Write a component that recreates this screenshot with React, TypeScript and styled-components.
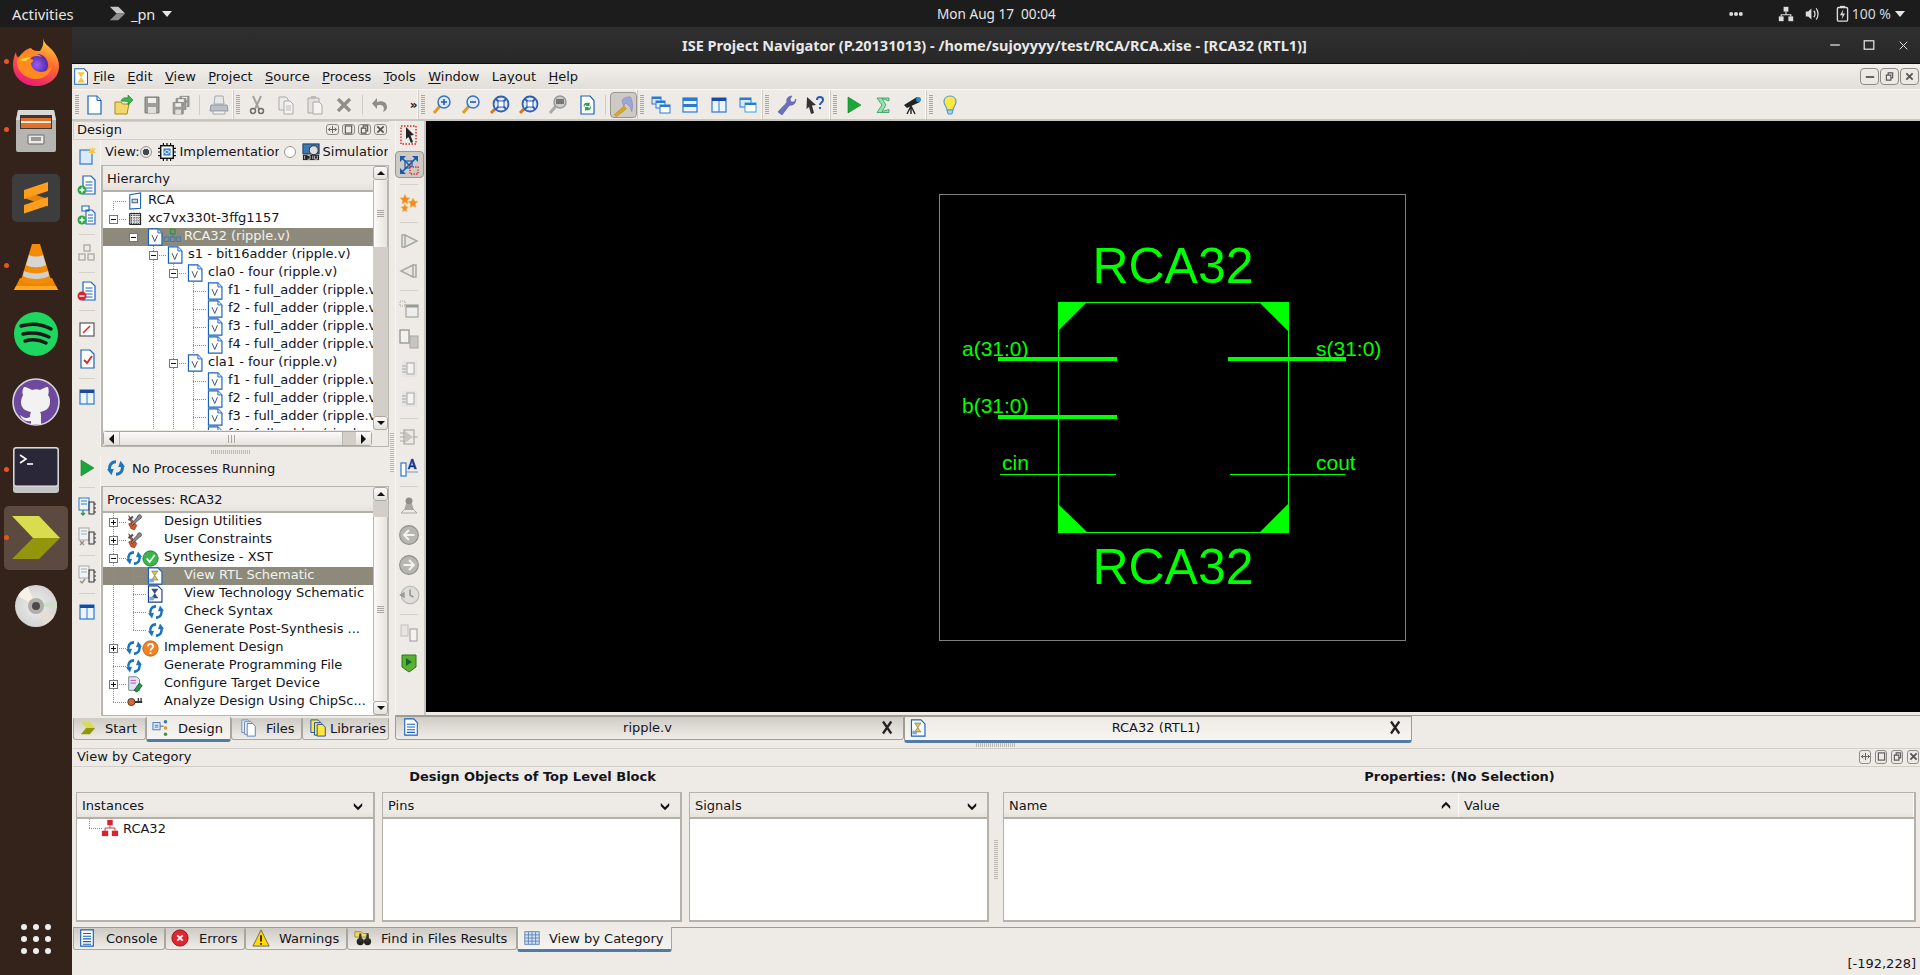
import React from 'react';
import styled, { createGlobalStyle } from 'styled-components';

const Global = createGlobalStyle`
  html, body { margin: 0; padding: 0; height: 100%; overflow: hidden; background: #33231a; }
  body { font-family: "DejaVu Sans", Verdana, sans-serif; font-size: 13px; color: #14141c; }
  #root { height: 100%; }
  * { box-sizing: border-box; }
`;

const Screen = styled.div`width:1920px;height:975px;display:flex;flex-direction:column;overflow:hidden;`;
const TopBar = styled.header`height:27px;flex:none;background:#1c1c1c;color:#e6e6e6;display:flex;align-items:center;padding:0 15px 0 12px;font-family:"Noto Sans","Open Sans",sans-serif;font-size:14px;position:relative;`;
const Activities = styled.span`width:97px;font-size:14.8px;`;
const AppName = styled.span`display:flex;align-items:center;gap:5px;`;
const AppLabel = styled.span`margin-right:2px;font-size:14.500px;`;
const Clock = styled.span`position:absolute;left:937px;top:4px;font-size:13.6px;white-space:pre;`;
const Tray = styled.div`margin-left:auto;display:flex;align-items:center;color:#dcdcdc;`;
const TrayIcon = styled.span<{ $gap: number }>`display:flex;margin-right:${p => p.$gap}px;`;
const Percent = styled.span`font-size:14px;margin:0 4px 0 1px;color:#cfd6dc;`;
const Caret = styled.i`display:block;width:0;height:0;border-left:5px solid transparent;border-right:5px solid transparent;border-top:6px solid #e6e6e6;`;
const Desk = styled.div`flex:1;display:flex;min-height:0;`;
const Dock = styled.nav`width:72px;flex:none;background:#33231a;display:flex;flex-direction:column;align-items:center;padding:1px 0 0;`;
const DockSlot = styled.div<{ $active?: boolean }>`width:64px;display:flex;align-items:center;justify-content:center;position:relative;border-radius:5px;background:${p => p.$active ? '#5c4a40' : 'transparent'};height:${p => p.$active ? '64px' : '68px'};margin:${p => p.$active ? '2px 0' : '0'};`;
const RunDot = styled.i`position:absolute;left:0;top:50%;margin-top:-3px;width:5px;height:5px;border-radius:50%;background:#e95420;`;
const AppGrid = styled.div`margin-top:auto;margin-bottom:21px;display:grid;grid-template-columns:repeat(3,6px);grid-gap:6px;`;
const AppDot = styled.i`width:6px;height:6px;border-radius:50%;background:#eee;`;

const Win = styled.main`flex:1;min-width:0;display:flex;flex-direction:column;background:#eeebe6;`;
const TitleBar = styled.div`height:37px;flex:none;background:linear-gradient(#2f2f2f,#282828);border-bottom:1px solid #0e0e0e;color:#e8e8e8;display:flex;align-items:center;font-family:"Noto Sans","Open Sans",sans-serif;font-weight:700;font-size:14.5px;padding-left:610px;position:relative;`;
const WinCtl = styled.div`position:absolute;right:0;top:0;height:36px;display:flex;align-items:center;`;
const WinBtn = styled.span`width:34px;display:flex;justify-content:center;`;
const MenuBar = styled.div`height:26px;flex:none;background:linear-gradient(#f1efea,#e2dfda);border-bottom:1px solid #f8f7f4;display:flex;align-items:center;padding-left:1px;`;
const MenuItem = styled.span`padding:0 6.2px;white-space:nowrap;line-height:26px;& u{text-underline-offset:2px;}`;
const MenuIcon = styled.span`width:15px;margin-right:-1px;display:flex;`;
const MdiBtns = styled.div`margin-left:auto;display:flex;gap:1px;padding-right:1px;`;
const MdiBtn = styled.span`width:19px;height:17px;border:1px solid #8e8b85;border-radius:4px;display:flex;align-items:center;justify-content:center;background:#ece9e4;`;
const ToolBar = styled.div`height:31px;flex:none;background:#eeebe6;border-bottom:2px solid #c9c6bf;display:flex;padding-left:0;margin-bottom:-1px;position:relative;z-index:1;`;
const ToolGroup = styled.div<{ $end?: boolean }>`display:flex;align-items:center;${p => p.$end ? '' : 'box-shadow:inset -1px 0 0 #fbfaf8,1px 0 0 #cfccc5;'}`;
const Grip = styled.i<{ $w?: number }>`width:${p => p.$w || 9.5}px;height:20px;flex:none;margin:0;background:repeating-linear-gradient(to bottom,#a9a69f 0 1px,transparent 1px 2px) 3px 0/4px 100% no-repeat;`;
const ToolBtn = styled.span<{ $on?: boolean; $w?: number }>`width:${p => p.$w || 29}px;height:${p => p.$on ? 26 : 24}px;flex:none;display:flex;align-items:center;justify-content:center;border-radius:4px;${p => p.$on ? 'background:#cdc9c3;border:1px solid #9a968f;' : ''}`;
const ToolSep = styled.i<{ $w?: number }>`width:${p => p.$w || 8.5}px;height:20px;flex:none;background:linear-gradient(#cfccc5,#cfccc5) center/1px 100% no-repeat;`;
const More = styled.span`width:23px;text-align:right;font-weight:700;font-size:12px;`;

const Workspace = styled.div`height:622px;flex:none;display:flex;padding-left:1px;`;
const LeftCol = styled.section`width:316px;flex:none;display:flex;flex-direction:column;`;
const VSplit = styled.div`width:6px;flex:none;display:flex;align-items:center;justify-content:center;padding-top:44px;`;
const VGrip = styled.i`width:4px;height:40px;background:repeating-linear-gradient(to bottom,#bdbab3 0 1px,transparent 1px 2px);`;
const PaneTitle = styled.div`height:19px;flex:none;margin-top:1px;border:1px solid #d2cfc8;border-width:1px 0 1px 1px;background:#eeebe6;display:flex;align-items:center;padding:0 0 3px 3px;`;
const PaneBtns = styled.div`margin-left:auto;display:flex;gap:3px;padding-right:2px;`;
const PaneBtn = styled.span`width:13px;height:11px;border:1px solid #8e8b85;border-radius:3px;display:flex;align-items:center;justify-content:center;`;
const Pane = styled.div<{ $h: number }>`height:${p => p.$h}px;flex:none;display:flex;`;
const IconRail = styled.div`width:28px;flex:none;display:flex;flex-direction:column;align-items:center;border-right:1px solid #f7f6f3;`;
const RailItem = styled.span`height:30px;width:100%;flex:none;display:flex;align-items:center;justify-content:center;`;
const RailFirst = styled(RailItem)`margin-top:-3px;`;
const RailSep = styled.i`height:8px;width:16px;flex:none;background:linear-gradient(#d4d1ca,#d4d1ca) center/100% 1px no-repeat;`;
const PaneMain = styled.div`flex:1;min-width:0;display:flex;flex-direction:column;`;
const ViewRow = styled.div`height:25px;flex:none;display:flex;align-items:center;padding:0 0 2px 4px;white-space:nowrap;overflow:hidden;`;
const Gap = styled.span<{ $w: number }>`width:${p => p.$w}px;flex:none;`;
const Radio = styled.i<{ $on?: boolean }>`width:12px;height:12px;flex:none;border-radius:50%;border:1px solid #9a968f;background:${p => p.$on ? 'radial-gradient(circle,#44484c 0 3px,#e6e4df 3.5px)' : '#fff'};`;
const ClipLabel = styled.span<{ $w: number }>`width:${p => p.$w}px;overflow:hidden;flex:none;`;
const StatusRow = styled.div`height:30px;flex:none;display:flex;align-items:center;gap:7px;padding:0 0 6px 6px;`;
const TreePanel = styled.div`flex:1;min-height:0;display:flex;flex-direction:column;border:1px solid #b9b6af;border-left-width:2px;background:#eeebe6;`;
const TreeTop = styled.div`flex:1;min-height:0;display:flex;`;
const TreeCol = styled.div`flex:1;min-width:0;display:flex;flex-direction:column;`;
const HeaderCell = styled.div`height:26px;flex:none;border-bottom:2px solid #b3b0a9;background:linear-gradient(#eeebe6 70%,#e5e2dc);display:flex;align-items:center;padding-left:4px;`;
const TreeBody = styled.div`flex:1;min-height:0;overflow:hidden;background:#fff;`;
const Row = styled.div<{ $sel?: boolean }>`height:18px;display:flex;align-items:center;padding-left:5px;white-space:nowrap;background:${p => p.$sel ? '#8d8a7b' : 'transparent'};color:${p => p.$sel ? '#f2f2ee' : '#14141c'};overflow:hidden;`;
const RowText = styled.span`padding-bottom:2px;line-height:16px;`;
const Indent = styled.i<{ $line?: boolean }>`width:20px;height:18px;flex:none;${p => p.$line ? 'background:repeating-linear-gradient(to bottom,#8f8f8f 0 1px,transparent 1px 2px) 5px 0/1px 100% no-repeat;' : ''}`;
const Exp = styled.span<{ $v?: 'full' | 'up' | 'down' | 'none' }>`width:20px;height:18px;flex:none;position:relative;display:block;
  &::before{content:'';position:absolute;left:5px;width:1px;top:${p => p.$v === 'down' ? '9px' : '0'};bottom:${p => p.$v === 'up' ? '9px' : '0'};display:${p => p.$v === 'none' ? 'none' : 'block'};background:repeating-linear-gradient(to bottom,#8f8f8f 0 1px,transparent 1px 2px);}
  &::after{content:'';position:absolute;left:5px;width:13px;top:9px;height:1px;background:repeating-linear-gradient(to right,#8f8f8f 0 1px,transparent 1px 2px);}
`;
const ExpBox = styled.b`position:absolute;z-index:1;left:1px;top:5px;width:9px;height:9px;border:1px solid #777;background:#fff;display:flex;align-items:center;justify-content:center;`;
const ExpBar = styled.i<{ $plus?: boolean }>`display:block;width:5px;height:1px;background:#111;position:relative;${p => p.$plus ? '&::after{content:"";position:absolute;left:2px;top:-2px;width:1px;height:5px;background:#111;}' : ''}`;
const IconBox = styled.span<{ $w: number; $pull?: boolean }>`width:${p => p.$w}px;height:18px;flex:none;display:flex;align-items:center;gap:0;${p => p.$pull ? 'margin-left:-2px;' : ''}`;
const ScrollV = styled.div`width:15px;flex:none;display:flex;flex-direction:column;background:#eeebe6;`;
const ScrollBtn = styled.span`height:14px;flex:none;border:1px solid #aaa7a0;border-radius:3px;background:linear-gradient(#fbfaf8,#e4e1db);display:flex;align-items:center;justify-content:center;`;
const Arrow = styled.i<{ $d: 'u' | 'd' | 'l' | 'r' }>`width:0;height:0;display:block;${p => p.$d === 'u' ? 'border-left:4px solid transparent;border-right:4px solid transparent;border-bottom:4px solid #111;' : p.$d === 'd' ? 'border-left:4px solid transparent;border-right:4px solid transparent;border-top:4px solid #111;' : p.$d === 'l' ? 'border-top:5px solid transparent;border-bottom:5px solid transparent;border-right:5px solid #111;' : 'border-top:5px solid transparent;border-bottom:5px solid transparent;border-left:5px solid #111;'}`;
const Thumb = styled.div<{ $h?: number }>`${p => p.$h ? `height:${p.$h}px;flex:none;` : 'flex:1;'}background:linear-gradient(to right,#fbfaf8,#e6e3dd);border:1px solid #b9b6af;border-width:0 1px;display:flex;align-items:center;justify-content:center;`;
const Track = styled.div<{ $h?: number }>`${p => p.$h ? `height:${p.$h}px;flex:none;` : 'flex:1;'}background:#d3cfc8;`;
const HTrack = styled.div`width:13px;flex:none;background:#d3cfc8;`;
const ThumbGrip = styled.i`width:7px;height:7px;background:repeating-linear-gradient(to bottom,#aaa7a0 0 1px,transparent 1px 2px);`;
const ScrollH = styled.div`height:15px;flex:none;margin:1px 16px 0 0;display:flex;border:1px solid #aaa7a0;border-radius:3px;`;
const HBtn = styled.span`width:15px;flex:none;background:linear-gradient(#fbfaf8,#e4e1db);display:flex;align-items:center;justify-content:center;`;
const HThumb = styled.div`flex:1;background:linear-gradient(#fbfaf8,#e6e3dd);border:1px solid #b9b6af;border-width:0 1px;display:flex;align-items:center;justify-content:center;`;
const HThumbGrip = styled.i`width:7px;height:8px;background:repeating-linear-gradient(to right,#aaa7a0 0 1px,transparent 1px 3px);`;
const HSplit = styled.div<{ $h: number }>`height:${p => p.$h}px;flex:none;display:flex;justify-content:center;align-items:center;`;
const HGrip = styled.i`width:40px;height:4px;background:repeating-linear-gradient(to right,#bdbab3 0 1px,transparent 1px 2px);`;

const TabRow = styled.div<{ $h: number; $line?: boolean }>`height:${p => p.$h}px;flex:none;display:flex;align-items:flex-start;padding-top:${p => p.$line ? 0 : 2}px;${p => p.$line ? 'border-top:1px solid #9f9c95;' : ''}`;
const Tab = styled.div<{ $w: number; $on?: boolean; $pad?: number; $gap?: number }>`width:${p => p.$w}px;flex:none;height:${p => p.$on ? 25 : 22}px;display:flex;align-items:center;gap:${p => p.$gap ?? 9}px;padding-left:${p => p.$pad || 5}px;padding-bottom:${p => p.$on ? 0 : 2}px;white-space:nowrap;border:1px solid #a9a69f;border-top-color:#d0cdc7;border-radius:0 0 3px 3px;background:${p => p.$on ? 'linear-gradient(#eeebe6,#f6f4f0)' : 'linear-gradient(#cfccc6,#f0ede8)'};${p => p.$on ? 'border-bottom:3px solid #4f7ba6;border-top:none;margin-top:-1px;' : ''}`;
const DocTab = styled.div<{ $w: number; $on?: boolean }>`width:${p => p.$w}px;flex:none;height:${p => p.$on ? 27 : 24}px;display:flex;align-items:center;padding:0 9px 2px 6px;white-space:nowrap;border:1px solid #9f9c95;border-radius:0 0 3px 3px;background:${p => p.$on ? 'linear-gradient(#eeebe6,#f7f5f1)' : 'linear-gradient(#cfccc6,#f0ede8)'};${p => p.$on ? 'border-bottom:3px solid #4f7ba6;' : ''}`;
const DocLabel = styled.span`flex:1;text-align:center;padding-right:5px;`;
const BigX = styled.span`display:flex;width:14px;justify-content:center;`;

const RightCol = styled.section`flex:1;min-width:0;display:flex;flex-direction:column;`;
const UpperRow = styled.div`height:595px;flex:none;display:flex;`;
const VTools = styled.div`width:31px;flex:none;display:flex;flex-direction:column;align-items:center;border-left:1px solid #f7f6f3;border-right:2px solid #c9c6bf;padding-right:2px;`;
const VBtn = styled.span<{ $on?: boolean }>`height:30px;width:29px;flex:none;display:flex;align-items:center;justify-content:center;border-radius:4px;${p => p.$on ? 'background:#cdc9c3;border:1px solid #9a968f;height:27px;margin:1px 0 2px;' : ''}`;
const VSep = styled.i`height:8px;width:18px;flex:none;background:linear-gradient(#d4d1ca,#d4d1ca) center/100% 1px no-repeat;`;
const Canvas = styled.div`flex:1;height:591px;margin-top:1px;background:#000;display:flex;`;
const Drawing = styled.svg`width:100%;height:100%;display:block;`;

const BottomTitle = styled.div`height:19px;flex:none;margin-left:1px;border:1px solid #d2cfc8;border-width:1px 0;display:flex;align-items:center;padding:0 0 2px 4px;`;
const BottomBtns = styled(PaneBtns)`padding-right:1px;gap:4px;`;
const TinyBtn = styled(PaneBtn)`width:12px;height:14px;`;
const Sections = styled.div`height:155px;flex:none;display:flex;padding:0 4px 0 4px;`;
const Section = styled.div<{ $w: number }>`width:${p => p.$w}px;flex:none;display:flex;flex-direction:column;`;
const SectionTitle = styled.div`height:25px;flex:none;font-weight:700;text-align:center;line-height:20px;`;
const SectionPanels = styled.div`flex:1;min-height:0;display:grid;grid-template-columns:299px 300px 300px;column-gap:7px;`;
const ListBox = styled.div<{ $grow?: boolean }>`border:1px solid #b5b2ab;border-width:1px 2px 2px 1px;display:flex;flex-direction:column;background:#fff;min-width:0;${p => p.$grow ? 'flex:1;' : ''}`;
const ListHead = styled.div`height:26px;flex:none;background:linear-gradient(#eeebe6 75%,#e6e3dd);border-bottom:2px solid #b3b0a9;display:flex;align-items:center;padding:1px 9px 0 5px;justify-content:space-between;`;
const PropHead = styled.div`height:26px;flex:none;background:linear-gradient(#eeebe6 75%,#e6e3dd);border-bottom:2px solid #b3b0a9;display:grid;grid-template-columns:455px 1fr;`;
const PropCell = styled.div`display:flex;align-items:center;justify-content:space-between;padding:1px 6px 0 5px;border-right:1px solid #fbfaf8;`;
const InstRow = styled.div`height:18px;display:flex;align-items:center;padding-left:7px;white-space:nowrap;`;
const InstIcon = styled.span`display:flex;margin:0 4px 0 -3px;`;
const SideGrip = styled.div`width:14px;flex:none;display:flex;align-items:center;justify-content:center;padding-top:30px;`;
const SideGripBar = styled.i`width:4px;height:40px;background:repeating-linear-gradient(to bottom,#bdbab3 0 1px,transparent 1px 2px);`;
const StatusBar = styled.div`flex:1;display:flex;align-items:center;justify-content:flex-end;padding:0 4px 0 0;`;
const BottomTabs = styled.div`height:25px;flex:none;margin-top:5px;margin-left:1px;border-top:1px solid #9f9c95;display:flex;align-items:flex-start;`;

/* ---------- icons ---------- */
const Ico = styled.svg.attrs<{ $s?: number }>({ viewBox: '0 0 20 20' })<{ $s?: number }>`width:${p => p.$s || 20}px;height:${p => p.$s || 20}px;flex:none;display:block;overflow:visible;`;
const B = '#1a62b8';
const IVFile = () => <Ico $s={18}><path d="M.5 1h10.500l4.500 4.500V19H.5z" fill="#fff" stroke={B} strokeWidth="1.300"/><path d="M11 1v4.500h4.500" fill="#d6e6f8" stroke={B}/><path d="M4.500 8l3 7 3-7" fill="none" stroke="#456" strokeWidth="1.100"/></Ico>;
const IModule = () => <Ico $s={18}><g transform="translate(-3 0)"><g fill="none" stroke="#3a78b8"><rect x="1" y="10" width="5" height="5"/><rect x="8" y="10" width="5" height="5"/><rect x="15" y="10" width="4" height="5"/></g><rect x="8" y="1.500" width="5" height="5" fill="none" stroke="#2c9a3a" strokeWidth="1.500"/><path d="M10.500 6.500v3" stroke="#3a78b8"/></g></Ico>;
const IProject = () => <Ico $s={18}><g transform="translate(-2 0)"><path d="M4 3l12-2v17l-12 1z" fill="#fff" stroke={B} strokeWidth="1.200"/><rect x="6.500" y="8" width="6" height="4" fill="#c6d9ee" stroke="#356"/></g></Ico>;
const IChip = () => <Ico $s={18}><g transform="translate(-2 0)"><rect x="4" y="4" width="12" height="12" fill="#eee" stroke="#222" strokeWidth="1.200"/><path d="M3 6h14M3 9h14M3 12h14M3 15h14M6 3v14M9 3v14M12 3v14M15 3v14" stroke="#222" strokeDasharray="1 1.500"/></g></Ico>;
const Refresh = ({ s = 16 }: { s?: number }) => <Ico $s={s}><path d="M10 3C4.500 3 1.500 8 3.500 13" fill="none" stroke="#1c75bc" strokeWidth="3.200"/><path d="M0 11.500l7.500-.5-2.500 7z" fill="#1c75bc"/><path d="M10 17c5.500 0 8.500-5 6.500-10" fill="none" stroke="#1c75bc" strokeWidth="3.200"/><path d="M20 8.500l-7.500.5 2.500-7z" fill="#1c75bc"/></Ico>;
const Check = () => <Ico $s={17}><circle cx="10" cy="10" r="9" fill="#3cb54a" stroke="#1c7a2a"/><path d="M5.500 10l3.500 4 6-8" fill="none" stroke="#fff" strokeWidth="2"/></Ico>;
const Question = () => <Ico $s={17}><circle cx="10" cy="10" r="9" fill="#f58220" stroke="#b85a10"/><path d="M7 7.500c0-4 6-4 6 0 0 2.500-3 2.500-3 5M10 14.500v2" fill="none" stroke="#fff" strokeWidth="2"/></Ico>;
const Tools = () => <Ico $s={18}><path d="M3 3l9 11-2.500 4.500-4-1L3 12l3-1z" fill="#d9532c" stroke="#7a2a12" strokeWidth=".7"/><path d="M16 2c2 2 1.500 4-.5 4.500L7 14l-1.500-1.500 7-8C12.500 3 14 1.500 16 2z" fill="#888" stroke="#333" strokeWidth=".7"/><path d="M2 7l5-4 1.500 2-5 4z" fill="#555"/></Ico>;
const SchemDoc = ({ tint = '#f3c63d', dark }: { tint?: string; dark?: boolean }) => <Ico $s={18}><path d="M.5 1h10.500l4.500 4.500V19H.5z" fill="#fff" stroke={dark ? '#1b3f8f' : B} strokeWidth="1.300"/><path d="M4 4.500h7l-3.500 5zM4 14.500h7l-3.500-5z" fill={tint} stroke="#555" strokeWidth=".6"/><rect x="1.500" y="13" width="5" height="4" fill="#7aa7dc"/></Ico>;
const Chip2 = () => <Ico $s={18}><path d="M3 2h9l3 3v12H3z" fill="#dde6f0" stroke="#6a7a8c"/><path d="M5 6h6M5 9h6" stroke="#d33a9a"/><path d="M9 17l6-8 3 3-6 7z" fill="#2c9a3a" stroke="#155"/></Ico>;
const KeyIcon = () => <Ico $s={18}><circle cx="6" cy="10" r="4" fill="#e0652c" stroke="#333"/><path d="M10 9h8v2h-8zM13 5.500h1.500V9H13zM16 5.500h1.500V9H16z" fill="#333"/></Ico>;
const Instance = () => <Ico $s={18}><rect x="7" y="1" width="6" height="6" fill="#d9232e"/><rect x="1" y="13" width="7" height="6" fill="#d9232e"/><rect x="12" y="13" width="7" height="6" fill="#d9232e"/><path d="M10 7v3M4.500 13v-3h11v3" fill="none" stroke="#a33"/></Ico>;

const NewDoc = () => <Ico><path d="M4 1h9l4 4.500V19H4z" fill="#fff" stroke={B} strokeWidth="1.200"/><path d="M13 1v4.500h4" fill="#d6e6f8" stroke={B}/></Ico>;
const OpenF = () => <Ico><path d="M2 7h6l1.500 2H16l-2 10H2z" fill="#f2d868" stroke="#a68a22"/><path d="M8 6c1-3 4-4 7-3V0l5 5-5 5V6.500c-3-.5-5 0-7-.5z" fill="#3cb54a" stroke="#1c7a2a" strokeWidth=".6"/></Ico>;
const Floppy = ({ x = 0, y = 0, s = 1 }: { x?: number; y?: number; s?: number }) => <g transform={`translate(${x} ${y}) scale(${s})`}><path d="M3 2h14v16H3z" fill="#9d9c97" stroke="#7d7c78"/><rect x="6" y="3" width="8" height="5" fill="#f0efec"/><rect x="6" y="12" width="8" height="6" fill="#e0dfdb"/></g>;
const Save = () => <Ico><Floppy/></Ico>;
const SaveAll = () => <Ico><Floppy x={7} y={0} s={.65}/><Floppy x={3} y={2} s={.7}/><Floppy x={0} y={6} s={.72}/></Ico>;
const Printer = () => <Ico><path d="M6 1h8l1 8H5z" fill="#e6e8ec" stroke="#a6a8ac"/><path d="M2 10h16l1 6H1z" fill="#bcc0c6" stroke="#94979c"/><path d="M4 16h12v3H4z" fill="#f2f2f2" stroke="#a6a8ac"/></Ico>;
const Cut = () => <Ico><path d="M6 1l6 13M14 1L8 14" stroke="#a3a29d" strokeWidth="2" fill="none"/><circle cx="6" cy="16" r="2.500" fill="none" stroke="#6f6e6a" strokeWidth="1.500"/><circle cx="14" cy="16" r="2.500" fill="none" stroke="#6f6e6a" strokeWidth="1.500"/></Ico>;
const Copy = () => <Ico><path d="M3 2h7l2 2v11H3z" fill="#eeedea" stroke="#aaa9a4"/><path d="M8 6h6l3 3v10H8z" fill="#f4f3f1" stroke="#aaa9a4"/><path d="M10 11h5M10 13h5M10 15h5" stroke="#bbb"/></Ico>;
const Paste = () => <Ico><path d="M3 3h11v15H3z" fill="#e4e2dd" stroke="#aaa9a4"/><rect x="6" y="1" width="5" height="3" fill="#bbb"/><path d="M8 7h6l3 3v9H8z" fill="#f4f3f1" stroke="#aaa9a4"/></Ico>;
const Cross = ({ c = '#8e8d88', w = 3.2 }: { c?: string; w?: number }) => <Ico><path d="M4 4l12 12M16 4L4 16" stroke={c} strokeWidth={w}/></Ico>;
const Undo = () => <Ico><path d="M7 7c5-2 10 0 10 5 0 2-1 4-4 5 1-2 2-6-2-7-1 0-3 0-4 .5V14L2 8.500 7 3z" fill="#8e8d88"/></Ico>;
const Mag = ({ g, grey }: { g: 'plus' | 'minus' | 'none'; grey?: boolean }) => <Ico><path d="M2 18l6-7" stroke={grey ? '#aaa' : '#e09a2a'} strokeWidth="3"/><circle cx="12" cy="7" r="6" fill={grey ? '#ccc' : '#dfeafa'} stroke={grey ? '#999' : '#3c72c0'} strokeWidth="1.500"/>{g === 'plus' && <path d="M9 7h6M12 4v6" stroke="#2a5ab0" strokeWidth="1.600"/>}{g === 'minus' && <path d="M9 7h6" stroke="#2a5ab0" strokeWidth="1.600"/>}{g === 'none' && <rect x="8" y="4" width="8" height="5" fill="#777"/>}</Ico>;
const Buoy = () => <Ico><path d="M1 18l4-4" stroke="#d9761a" strokeWidth="3"/><circle cx="11" cy="9" r="7.500" fill="#dfeafa" stroke="#2f5fb0" strokeWidth="1.800"/><path d="M6 4l10 10M16 4L6 14" stroke="#2f5fb0" strokeWidth="1.800"/><rect x="8" y="6" width="6" height="6" fill="#fff" stroke="#2f5fb0"/></Ico>;
const RefreshDoc = () => <Ico><path d="M4 1h9l4 4.500V19H4z" fill="#fff" stroke={B} strokeWidth="1.200"/><path d="M6.500 11c0-3 3-4 5-3l1-1v4h-4l1-1c-1-.5-2 0-2 2zM14 12c0 3-3 4-5 3l-1 1v-4h4l-1 1c1 .5 2 0 2-2z" fill="#27a34a"/></Ico>;
const Hammer = () => <Ico $s={22}><path d="M2 19l9-8 2 2.500-9 7z" fill="#e0a81a" stroke="#a67a10" strokeWidth=".5"/><path d="M9 6c2-3 6-4 8-3 2 4 2 9 1 13-1-4-3-7-6-7.500L10.500 11z" fill="#9da6d6" stroke="#7a82b4" strokeWidth=".5"/></Ico>;
const Win1 = () => <Ico><g stroke="#2a7ad0" strokeWidth="1"><rect x="1" y="2" width="9" height="7" fill="#dbe9fa"/><rect x="5" y="6" width="9" height="7" fill="#eaf2fc"/><rect x="9" y="10" width="10" height="8" fill="#fff"/></g><path d="M1 2h9v2H1zM5 6h9v2H5zM9 10h10v2H9z" fill="#2a7ad0"/></Ico>;
const Win2 = () => <Ico><rect x="3" y="3" width="14" height="14" fill="#eef4fc" stroke="#2a7ad0" strokeWidth="1.200"/><path d="M3 3h14v3H3zM3 9h14v3H3z" fill="#2a7ad0"/></Ico>;
const Win3 = ({ c = '#2a7ad0' }: { c?: string }) => <Ico><rect x="3" y="3" width="14" height="14" fill="#eef4fc" stroke={c} strokeWidth="1.200"/><path d="M3 3h14v3H3z" fill="#1a4aa0"/><path d="M10 6v11" stroke={c}/></Ico>;
const Win4 = () => <Ico><rect x="2" y="3" width="11" height="9" fill="#dbe9fa" stroke="#2a7ad0"/><rect x="7" y="8" width="11" height="9" fill="#fff" stroke="#3aa0e0"/><path d="M2 3h11v2H2zM7 8h11v2H7z" fill="#2a7ad0"/></Ico>;
const Wrench = () => <Ico><path d="M2 17c3-4 6-6 9-10-1-3 1-6 5-6l-2 3 1 3 3 0 2-3c0 4-3 7-6 6-3 3-5 6-8 10z" fill="#6a6fbf" stroke="#484c94" strokeWidth=".5"/></Ico>;
const HelpPtr = () => <Ico><path d="M2 2l9 8-4 .5L9 18l-3 1-2-7-2.500 2z" fill="#333"/><path d="M12 5c0-4 6-4 6 0 0 2.500-3 2.500-3 5M15 12v2" fill="none" stroke="#2a5ab0" strokeWidth="2"/></Ico>;
const Play = ({ s = 20 }: { s?: number }) => <Ico $s={s}><path d="M4 2l13 8-13 8z" fill="#1aa63a" stroke="#12802a" strokeWidth=".6"/></Ico>;
const Sigma = () => <Ico><path d="M4 3h12v3L9 3.500 13 10l-4 6.500 7-2v3H4l5-7.500z" fill="#9adfae" stroke="#2c9a5a" strokeWidth=".8"/></Ico>;
const Scope = () => <Ico><path d="M2 10L15 2l3 5L5 13z" fill="#222"/><circle cx="16.500" cy="4.500" r="2.500" fill="#2a8ac0"/><path d="M9 11l-4 8M9 11l4 8M9 11v8" stroke="#222" strokeWidth="1.400"/></Ico>;
const Bulb = () => <Ico><path d="M10 1c4 0 6 3 6 6 0 3-3 5-3 8H7c0-3-3-5-3-8 0-3 2-6 6-6z" fill="#ffe640" stroke="#4a9ad0" strokeWidth="1.100"/><path d="M7 15h6l-1 4H8z" fill="#a8d0ec" stroke="#4a9ad0"/></Ico>;
const Select = () => <Ico><rect x="2" y="1" width="15" height="18" fill="none" stroke="#e02020" strokeWidth="1.400" strokeDasharray="1.500 1.500"/><path d="M7 2l8 8-3.500.5L14 17l-2 1-2.500-6L7 14z" fill="#222"/></Ico>;
const Fit = () => <Ico><path d="M3 3l14 14M17 3L3 17" stroke="#1a5ab0" strokeWidth="1.600" fill="none"/><path d="M1 1h6L1 7zM19 1h-6l6 6zM1 19h6l-6-6z" fill="#1a5ab0"/><rect x="6" y="6" width="7" height="7" fill="none" stroke="#1a5ab0" strokeWidth="1.200"/><rect x="11" y="12" width="8" height="7" fill="#cdc9c3" stroke="#e02020" strokeWidth="1.300" strokeDasharray="1.300 1.300"/></Ico>;
const Stars = () => <Ico><path d="M6 1l1.500 3.500L11 5 8.500 7.500 9 11 6 9.500 3 11l.5-3.500L1 5l3.500-.500zM14 5l1.500 3 3.500.5-2.500 2.500.5 3.500-3-1.500-3 1.500.5-3.500L9 8.500l3.500-.5zM6 11l1 2.500 2.500.5-2 2 .5 3-2-1.500-2.500 1.500.5-3-2-2 2.500-.5z" fill="#f08a2a" stroke="#f2c64a" strokeWidth=".5"/></Ico>;
const G = '#a9a8a3';
const GateR = () => <Ico><path d="M3 4h3v12H3zM6 4l12 6-12 6z" fill="#e8e7e3" stroke={G} strokeWidth="1.500"/></Ico>;
const GateL = () => <Ico><path d="M17 4h-3v12h3zM14 4L2 10l12 6z" fill="#e8e7e3" stroke={G} strokeWidth="1.500"/></Ico>;
const Gray1 = () => <Ico><rect x="7" y="6" width="12" height="12" fill="#eee" stroke={G} strokeWidth="1.300"/><rect x="7" y="6" width="12" height="2.500" fill="#999"/><path d="M1 2h5v5H1z" fill="none" stroke={G} strokeDasharray="1 1"/></Ico>;
const Gray2 = () => <Ico><rect x="1" y="1" width="9" height="13" fill="#f2f1ee" stroke="#8e8d88" strokeWidth="1.200"/><rect x="11" y="7" width="8" height="12" fill="#c6c5c0" stroke={G}/></Ico>;
const Gray3 = () => <Ico><rect x="3" y="2" width="15" height="16" fill="#e6e5e2"/><rect x="8" y="4" width="7" height="11" fill="#f4f3f1" stroke={G}/><path d="M3 7h4M3 10h4M3 13h4" stroke={G}/></Ico>;
const Gray4 = () => <Ico><path d="M1 6h5M1 10h5M1 14h5M14 10h5" stroke={G}/><rect x="5" y="3" width="10" height="14" fill="none" stroke={G} strokeWidth="1.200"/><path d="M6 4l8 6-8 6z" fill="#c6c5c0"/></Ico>;
const TextA = () => <Ico><rect x="2" y="6" width="5" height="13" fill="#fff" stroke="#2a7ad0" strokeWidth="1.200"/><path d="M9 12L12.500 2h1.500l3.500 10h-2l-.7-2h-3.600l-.7 2zM11.700 8.500h2.600L13 4.500zM8 15h11" fill="#1a3a90" stroke="#1a3a90" strokeWidth=".5"/></Ico>;
const Pawn = () => <Ico><circle cx="10" cy="6" r="3.500" fill="#8e8d88"/><path d="M7 9h6l2 6H5z" fill="#a8a7a2"/><path d="M2 18l8-8 8 8z" fill="none" stroke={G}/></Ico>;
const Round = ({ d }: { d: 'l' | 'r' }) => <Ico $s={22}><circle cx="10" cy="10" r="8.500" fill="#b7b6b1" stroke="#8e8d88"/><path d={d === 'l' ? 'M15 10H6M10 5.500L5.500 10l4.500 4.500' : 'M5 10h9M10 5.500l4.500 4.500L10 14.500'} fill="none" stroke="#f4f3f0" strokeWidth="1.800"/></Ico>;
const Clock2 = () => <Ico $s={22}><circle cx="11" cy="10" r="8" fill="#dededb" stroke="#b5b4af"/><path d="M1 10l5-3v6z" fill="#9a9994"/><path d="M11 5v5l3 2" stroke="#8e8d88" strokeWidth="1.300" fill="none"/></Ico>;
const TwoBox = () => <Ico><rect x="2" y="2" width="7" height="11" fill="#e6e5e2" stroke="#c2c1bc"/><rect x="11" y="6" width="7" height="12" fill="#f4f3f1" stroke={G} strokeWidth="1.200"/></Ico>;
const GreenPin = () => <Ico><path d="M3 2h14v12l-7 5-7-5z" fill="#5cb030" stroke="#2a7a14"/><path d="M7 5l6 4-6 4z" fill="#163"/></Ico>;
const NewLeaf = () => <Ico><rect x="3" y="5" width="12" height="14" fill="#dbe9fa" stroke="#2a7ad0" strokeWidth="1.200"/><path d="M15 1l1 3 3-1-2 3 2 2-3 0-1 2-1-2-3 0 2-2-1-3 3 1z" fill="#f7c64a"/></Ico>;
const DocList = ({ sign }: { sign?: string }) => <Ico><path d="M6 1h8l4 4v14H6z" fill="#fff" stroke={B} strokeWidth="1.200"/><path d="M8.500 7h7M8.500 10h7M8.500 13h7M8.500 16h7" stroke={B}/>{sign && <><circle cx="5" cy="15" r="4.500" fill={sign}/><path d={sign === '#d9232e' ? 'M2.500 15h5' : 'M2.500 15h5M5 12.500v5'} stroke="#fff" strokeWidth="1.500"/></>}</Ico>;
const DocList2 = () => <Ico><path d="M5 1h7v5H5zM9 5h6l3 3v11H9z" fill="#fff" stroke={B} strokeWidth="1.100"/><path d="M11 10h5M11 13h5M11 16h5" stroke={B}/><circle cx="5" cy="15" r="4.500" fill="#2ea84a"/><path d="M2.500 15h5M5 12.500v5" stroke="#fff" strokeWidth="1.500"/></Ico>;
const Nodes = () => <Ico><rect x="7" y="2" width="6" height="6" fill="none" stroke="#a9a8a3" strokeWidth="1.300"/><rect x="2" y="11" width="6" height="6" fill="none" stroke="#a9a8a3" strokeWidth="1.300"/><rect x="11" y="11" width="6" height="6" fill="none" stroke="#a9a8a3" strokeWidth="1.300"/></Ico>;
const RedGauge = () => <Ico><rect x="3" y="4" width="14" height="13" fill="#fff" stroke="#555" strokeWidth="1.200"/><path d="M6 14l7-7" stroke="#d9232e" strokeWidth="1.500"/></Ico>;
const CheckDoc = () => <Ico><path d="M4 1h9l4 4v14H4z" fill="#fff" stroke={B} strokeWidth="1.200"/><path d="M7 11l3 3 5-7" stroke="#d9232e" strokeWidth="1.800" fill="none"/></Ico>;
const Chip3 = ({ c, m }: { c: string; m: string }) => <Ico><rect x="2" y="2" width="10" height="12" fill="#eef4fc" stroke={c} strokeWidth="1"/><path d="M4 5h6M4 8h6" stroke={c}/><rect x="12" y="6" width="5" height="12" fill="none" stroke="#333"/><path d="M17 8h2M17 12h2M17 16h2" stroke="#333"/>{m === 'd' && <path d="M6 14v5M4 17l2 2 2-2" stroke="#2a9a3a" strokeWidth="1.300" fill="none"/>}{m === 'x' && <path d="M3 15l4 4M7 15l-4 4" stroke="#8e8d88" strokeWidth="1.300"/>}{m === 'c' && <path d="M3 17l2 2 3-4" stroke="#8e8d88" strokeWidth="1.300" fill="none"/>}</Ico>;
const ImplIcon = () => <Ico $s={18}><rect x="3" y="3" width="14" height="14" fill="#fff" stroke="#111" strokeWidth="1.600"/><path d="M0 6h3M0 10h3M0 14h3M17 6h3M17 10h3M17 14h3M6 0v3M10 0v3M14 0v3M6 17v3M10 17v3M14 17v3" stroke="#111" strokeWidth="1.300"/><rect x="6" y="6" width="8" height="8" fill="#3a8ad0"/><path d="M7.500 10.500c0-3 5-3 5-.5M12.500 9.500c0 3-5 3-5 .5" stroke="#fff" fill="none"/></Ico>;
const SimIcon = () => <Ico $s={18}><rect x="1" y="1" width="18" height="11" fill="#3a78b8" stroke="#234"/><circle cx="13" cy="8" r="5" fill="#ddd" stroke="#222"/><rect x="1" y="13" width="18" height="6" fill="#222"/><path d="M3 14v4M6 14h3v4h-3M12 14v4M14 14v4h3v-4" stroke="#fff" fill="none" strokeWidth=".8"/></Ico>;
const Chevron = ({ s = 18 }: { s?: number }) => <Ico $s={s}><path d="M2 3h10l6 7H8z" fill="#d9dc4e"/><path d="M18 10l-6 7H2l6-7z" fill="#93960c"/></Ico>;
const FlowIcon = () => <Ico $s={18}><rect x="1" y="4" width="8" height="8" fill="#dbe9fa" stroke="#3a78b8"/><path d="M3 7h4M3 9h4" stroke="#3a78b8"/><circle cx="15" cy="3" r="2" fill="#3a78b8"/><circle cx="15" cy="10" r="2" fill="#e09a2a"/><circle cx="15" cy="17" r="2" fill="#3a9a4a"/><path d="M9 8h4" stroke="#555"/></Ico>;
const FilesIcon = () => <Ico $s={18}><path d="M2 1h7l2 2v12H2z" fill="#dbe9fa" stroke="#6a8ab8"/><path d="M5 3h7l2 2v12H5z" fill="#eaf2fc" stroke="#6a8ab8"/><path d="M8 5h6l3 3v11H8z" fill="#fff" stroke="#4a7ac0"/></Ico>;
const LibIcon = () => <Ico $s={18}><path d="M1 1h8l2 2v12H1z" fill="#ffe640" stroke="#1a4aa0"/><path d="M5 4h7l2 2v12H5z" fill="#ffe640" stroke="#1a4aa0"/><path d="M8 6h6l3 3v10H8z" fill="#ffe640" stroke="#1a4aa0"/></Ico>;
const DocLines = () => <Ico $s={18}><path d="M3 1h10l4 4v14H3z" fill="#fff" stroke={B} strokeWidth="1.200"/><path d="M5.500 7h9M5.500 10h9M5.500 13h9M5.500 16h9" stroke={B} strokeWidth="1.200"/></Ico>;
const ConsoleIco = () => <Ico $s={18}><path d="M3 1h14v18H3z" fill="#fff" stroke={B} strokeWidth="1.300"/><path d="M5.500 5h9M5.500 8h9M5.500 11h9M5.500 14h9M5.500 17h9" stroke={B} strokeWidth="1.200"/></Ico>;
const ErrIco = () => <Ico $s={18}><circle cx="10" cy="10" r="9" fill="#e0262e" stroke="#8a1218"/><path d="M7 7l6 6M13 7l-6 6" stroke="#fff" strokeWidth="2"/></Ico>;
const WarnIco = () => <Ico $s={18}><path d="M10 1l9 18H1z" fill="#ffd900" stroke="#444" strokeWidth=".8"/><path d="M10 7v7M10 15.500v2" stroke="#111" strokeWidth="1.800"/></Ico>;
const FindIco = () => <Ico $s={18}><path d="M1 3h7l2 2h6v4H1z" fill="#f2d868" stroke="#a68a22"/><circle cx="7" cy="14" r="4" fill="#222"/><circle cx="15" cy="14" r="4" fill="#222"/><path d="M6 5h2l1 9H5zM14 5h2l1 9h-4z" fill="#333"/></Ico>;
const GridIco = () => <Ico $s={18}><rect x="2" y="3" width="16" height="14" fill="#d6e4f6" stroke="#5a82b8"/><path d="M2 6.500h16M2 10h16M2 13.500h16M6 3v14M10 3v14M14 3v14" stroke="#5a82b8"/></Ico>;
const CloseX = () => <Ico $s={15}><path d="M4 2l11 16M15 2L4 18" stroke="#222" strokeWidth="3"/></Ico>;
const Chev = ({ up }: { up?: boolean }) => <Ico $s={12}><path d={up ? 'M3 15l7-7 7 7v-5l-7-7-7 7z' : 'M3 5l7 7 7-7v5l-7 7-7-7z'} fill="#111"/></Ico>;
const TitleGlyph = ({ k }: { k: 'h' | 's' | 'r' | 'x' }) => <Ico $s={9}>{k === 'h' && <path d="M1 10h18M1 10l4-4M1 10l4 4M19 10l-4-4M19 10l-4 4M10 2v16" stroke="#555" strokeWidth="2" fill="none"/>}{k === 's' && <rect x="3" y="2" width="14" height="16" fill="none" stroke="#555" strokeWidth="2.500"/>}{k === 'r' && <path d="M3 7h10v11H3zM7 7V2h10v11h-4" fill="none" stroke="#555" strokeWidth="2.500"/>}{k === 'x' && <path d="M3 3l14 14M17 3L3 17" stroke="#555" strokeWidth="4"/>}</Ico>;

/* dock logos */
const D = styled.svg.attrs<{ $s?: number }>({ viewBox: '0 0 48 48' })<{ $s?: number }>`width:${p => p.$s || 48}px;height:${p => p.$s || 48}px;display:block;`;
const Firefox = () => <D><defs><linearGradient id="ffa" x1="0.7" y1="0" x2="0.3" y2="1"><stop offset="0" stopColor="#ffd53a"/><stop offset=".45" stopColor="#ff6a2e"/><stop offset="1" stopColor="#e8167f"/></linearGradient><radialGradient id="ffb"><stop offset="0" stopColor="#9a5cf5"/><stop offset="1" stopColor="#4f2aa8"/></radialGradient></defs><path d="M31 0c1 6 6 8 10 13 4 5 6 10 6 15 0 12-10 20-23 20C11 48 1 39 1 27c0-5 1-9 3-13 0 3 1 5 3 6 2-5 7-9 12-10 2 3 6 3 9 3 3-4 4-8 3-13z" fill="url(#ffa)"/><circle cx="25" cy="27" r="11" fill="url(#ffb)"/><path d="M6 20c3-4 9-7 14-6 4 1 8 3 10 5-5-2-10-1-12 2 5 0 3 3 1 4 0 5 5 9 10 9 5 0 9-3 11-7 0 8-8 14-16 14C14 41 6 34 5 26c0-2 0-4 1-6z" fill="#ff8a1e"/><path d="M8 22c3-2 7-3 11-2-2 1-4 1-5 3-2 0-4 0-6-1z" fill="#ffd53a"/></D>;
const FileCab = () => <D><path d="M6 4h36l2 10v30a2 2 0 0 1-2 2H6a2 2 0 0 1-2-2V14z" fill="#b5b5b1"/><path d="M6 4h36l2 10H4z" fill="#d9d9d6"/><path d="M8 9h32v14H8z" fill="#3e3632"/><path d="M9 12h30v10H9z" fill="#e0702a"/><path d="M9 15h30v2H9z" fill="#f7f1e3"/><rect x="16" y="29" width="16" height="9" rx="1" fill="#e9e9e6" stroke="#666"/><rect x="19" y="31" width="10" height="4" fill="#999"/></D>;
const Sublime = () => <D><rect width="48" height="48" rx="5" fill="#3d3d3d"/><path d="M12 17l24 8v7.500L12 24z" fill="#e8860c"/><path d="M36 8v9L12 25v-9z" fill="#ff9d1c"/><path d="M36 23v8.500L12 39.500V31z" fill="#ff9d1c"/></D>;
const Vlc = () => <D><path d="M2 48l6-12h32l6 12z" fill="#f08400"/><path d="M4 44h40l2 4H2z" fill="#ffa822"/><path d="M20 2h8l11 36c-6 5-24 5-30 0z" fill="#f28c08"/><path d="M17 13c4 2 10 2 14 0l3 10c-5 3-15 3-20 0z" fill="#d6d6d6"/><path d="M12 29c6 3 18 3 24 0l1 5c-6 4-20 4-26 0z" fill="#d0d0d0"/></D>;
const Spotify = () => <D><circle cx="24" cy="24" r="22" fill="#1ed760"/><path d="M9 16c10-3 21-2 30 3M11 24c9-2 18-1 26 3M13 31c7-2 15-1 21 2" fill="none" stroke="#1a1a1a" strokeWidth="3.500" strokeLinecap="round"/></D>;
const Gh = () => <D><circle cx="24" cy="24" r="23" fill="#6e4a9e" stroke="#d8d6dc" strokeWidth="1.600"/><path d="M12 9c3 0 6 2 8 3 3-1 6-1 8 0 2-1 5-3 8-3 1 3 1 6 0 8 2 2 2 5 2 7 0 6-4 9-10 10 1 1 1 3 1 5v7h-10v-3c-5 1-9-1-11-6 2 1 5 5 10 2 0-1 0-3 1-5-6-1-10-4-10-10 0-2 1-5 2-7-1-2-1-5 1-8z" fill="#f2f2f2"/></D>;
const Term = () => <D><rect x="1" y="1" width="46" height="46" rx="3" fill="#c4c4c4"/><rect x="2" y="2" width="44" height="38" rx="2" fill="#2a2838" stroke="#eee"/><path d="M8 9l6 4-6 4" stroke="#fff" strokeWidth="1.600" fill="none"/><path d="M15 18h6" stroke="#fff" strokeWidth="1.600"/></D>;
const IseLogo = () => <D><path d="M0 2h27l21 22H21z" fill="#d9dc4e"/><path d="M48 24L27 45H0l21-21z" fill="#93960c"/></D>;
const Dvd = () => <D><defs><radialGradient id="dvd"><stop offset=".2" stopColor="#aaa"/><stop offset=".25" stopColor="#e8e8e8"/><stop offset="1" stopColor="#d4d4d4"/></radialGradient></defs><circle cx="24" cy="24" r="21" fill="url(#dvd)"/><path d="M24 24L6 14A21 21 0 0 1 16 5z" fill="#f6f2e6"/><path d="M24 24l18 10a21 21 0 0 1-10 9z" fill="#e6dcd6"/><path d="M24 24L44 18a21 21 0 0 1 1 8z" fill="#cfe0c8"/><circle cx="24" cy="24" r="8" fill="#b0aeaa"/><circle cx="24" cy="24" r="4" fill="#4a4a48"/></D>;

const dockApps: { el: React.ReactNode; run?: boolean; active?: boolean }[] = [
  { el: <Firefox />, run: true }, { el: <FileCab />, run: true }, { el: <Sublime /> }, { el: <Vlc />, run: true },
  { el: <Spotify /> }, { el: <Gh /> }, { el: <Term />, run: true }, { el: <IseLogo />, run: true, active: true }, { el: <Dvd /> },
];

type TreeItem = { d: number; lines?: number[]; e?: 'm' | 'p' | 'l'; v?: 'full' | 'up' | 'down' | 'none'; ic: React.ReactNode; w: number; t: string; sel?: boolean; pull?: boolean };
const fa = (t: string): TreeItem => ({ d: 4, lines: [2, 3], e: 'l', v: 'full', ic: <IVFile />, w: 20, t });
const hier: TreeItem[] = [
  { d: 0, e: 'l', v: 'down', ic: <IProject />, w: 20, t: 'RCA' },
  { d: 0, e: 'm', v: 'none', ic: <IChip />, w: 20, t: 'xc7vx330t-3ffg1157' },
  { d: 1, e: 'm', v: 'none', ic: <><IVFile /><IModule /></>, w: 36, t: 'RCA32 (ripple.v)', sel: true },
  { d: 2, e: 'm', v: 'full', ic: <IVFile />, w: 20, t: 's1 - bit16adder (ripple.v)' },
  { d: 3, lines: [2], e: 'm', v: 'full', ic: <IVFile />, w: 20, t: 'cla0 - four (ripple.v)' },
  fa('f1 - full_adder (ripple.v)'), fa('f2 - full_adder (ripple.v)'), fa('f3 - full_adder (ripple.v)'), fa('f4 - full_adder (ripple.v)'),
  { d: 3, lines: [2], e: 'm', v: 'full', ic: <IVFile />, w: 20, t: 'cla1 - four (ripple.v)' },
  fa('f1 - full_adder (ripple.v)'), fa('f2 - full_adder (ripple.v)'), fa('f3 - full_adder (ripple.v)'), fa('f4 - full_adder (ripple.v)'),
];
const R = <Refresh />;
const proc: TreeItem[] = [
  { d: 0, e: 'p', v: 'full', ic: <Tools />, w: 38, pull: true, t: 'Design Utilities' },
  { d: 0, e: 'p', v: 'full', ic: <Tools />, w: 38, pull: true, t: 'User Constraints' },
  { d: 0, e: 'm', v: 'full', ic: <>{R}<Check /></>, w: 38, pull: true, t: 'Synthesize - XST' },
  { d: 1, lines: [0], e: 'l', v: 'full', ic: <SchemDoc />, w: 36, t: 'View RTL Schematic', sel: true },
  { d: 1, lines: [0], e: 'l', v: 'full', ic: <SchemDoc tint="#2a4a9a" dark />, w: 36, t: 'View Technology Schematic' },
  { d: 1, lines: [0], e: 'l', v: 'full', ic: R, w: 36, t: 'Check Syntax' },
  { d: 1, lines: [0], e: 'l', v: 'up', ic: R, w: 36, t: 'Generate Post-Synthesis ...' },
  { d: 0, e: 'p', v: 'full', ic: <>{R}<Question /></>, w: 38, pull: true, t: 'Implement Design' },
  { d: 0, e: 'l', v: 'full', ic: R, w: 38, pull: true, t: 'Generate Programming File' },
  { d: 0, e: 'p', v: 'full', ic: <Chip2 />, w: 38, pull: true, t: 'Configure Target Device' },
  { d: 0, e: 'l', v: 'up', ic: <KeyIcon />, w: 38, pull: true, t: 'Analyze Design Using ChipSc...' },
];
const TreeRows = ({ items }: { items: TreeItem[] }) => <>{items.map((it, i) => (
  <Row key={i} $sel={it.sel}>
    {Array.from({ length: it.d }, (_, k) => <Indent key={k} $line={it.lines?.includes(k)} />)}
    <Exp $v={it.v}>{it.e !== 'l' && <ExpBox><ExpBar $plus={it.e === 'p'} /></ExpBox>}</Exp>
    <IconBox $w={it.w} $pull={it.pull}>{it.ic}</IconBox>
    <RowText>{it.t}</RowText>
  </Row>))}</>;

const Menu = ({ t, u = 0 }: { t: string; u?: number }) => <MenuItem>{t.slice(0, u)}<u>{t[u]}</u>{t.slice(u + 1)}</MenuItem>;
const PaneButtons = () => <PaneBtns>{(['h', 's', 'r', 'x'] as const).map(k => <PaneBtn key={k}><TitleGlyph k={k} /></PaneBtn>)}</PaneBtns>;

const green = '#00ff00';
const Schematic = () => (
  <Drawing viewBox="426 121 1494 591" fontFamily="Liberation Sans, Arial, sans-serif" fill={green}>
    <rect x="939.5" y="194.5" width="466" height="446" fill="none" stroke="#808080"/>
    <rect x="1058.5" y="302.5" width="230" height="230" fill="none" stroke={green}/>
    <path d="M1058 302h29l-29 29zM1289 302h-30l30 30zM1058 533h30l-30-29zM1289 533h-30l30-30z"/>
    <text x="1173" y="283" fontSize="50" textAnchor="middle">RCA32</text>
    <text x="1173" y="584" fontSize="50" textAnchor="middle">RCA32</text>
    <path d="M998 359h119M998 417h119M1228 359h118" stroke={green} strokeWidth="4" fill="none"/>
    <path d="M1000 474.5h116M1230 474.5h115" stroke={green} fill="none"/>
    <g fontSize="21">
      <text x="962" y="356">a(31:0)</text>
      <text x="962" y="413">b(31:0)</text>
      <text x="1002" y="470">cin</text>
      <text x="1316" y="356">s(31:0)</text>
      <text x="1316" y="470">cout</text>
    </g>
  </Drawing>
);

export default function App() {
  return (
    <Screen>
      <Global />
      <TopBar>
        <Activities>Activities</Activities>
        <AppName><Ico $s={17}><path d="M1 2h10l8 8H9z" fill="#c8c8c8"/><path d="M19 10l-8 8H1l8-8z" fill="#8c8c8c"/></Ico><AppLabel>_pn</AppLabel><Caret /></AppName>
        <Clock>Mon Aug 17  00:04</Clock>
        <Tray>
          <TrayIcon $gap={34}><Ico $s={16}><circle cx="4" cy="10" r="2.500" fill="#ddd"/><circle cx="10" cy="10" r="2.500" fill="#ddd"/><circle cx="16" cy="10" r="2.500" fill="#ddd"/></Ico></TrayIcon>
          <TrayIcon $gap={11}><Ico $s={16}><rect x="7" y="1" width="6" height="6" fill="#ddd"/><rect x="1" y="13" width="6" height="6" fill="#ddd"/><rect x="13" y="13" width="6" height="6" fill="#ddd"/><path d="M10 7v4M4 13v-2h12v2" stroke="#ddd" fill="none" strokeWidth="1.400"/></Ico></TrayIcon>
          <TrayIcon $gap={13}><Ico $s={16}><path d="M1 7h3l4-4v14l-4-4H1z" fill="#ddd"/><path d="M11 6c2 2 2 6 0 8M14 3c3 4 3 10 0 14" stroke="#ddd" strokeWidth="1.600" fill="none"/></Ico></TrayIcon>
          <Ico $s={17}><rect x="4" y="3" width="12" height="16" rx="1.500" fill="none" stroke="#ddd" strokeWidth="1.600"/><rect x="7" y="1" width="6" height="2" fill="#ddd"/><path d="M11 5l-4 7h3l-1 5 4-7h-3z" fill="#ddd"/></Ico>
          <Percent>100 %</Percent><Caret />
        </Tray>
      </TopBar>
      <Desk>
        <Dock>
          {dockApps.map((a, i) => <DockSlot key={i} $active={a.active}>{a.run && <RunDot />}{a.el}</DockSlot>)}
          <AppGrid>{Array.from({ length: 9 }, (_, i) => <AppDot key={i} />)}</AppGrid>
        </Dock>
        <Win>
          <TitleBar>ISE Project Navigator (P.20131013) - /home/sujoyyyy/test/RCA/RCA.xise - [RCA32 (RTL1)]
            <WinCtl>
              <WinBtn><Ico $s={12}><path d="M2 10h16" stroke="#eee" strokeWidth="2"/></Ico></WinBtn>
              <WinBtn><Ico $s={12}><rect x="2" y="3" width="16" height="14" fill="none" stroke="#eee" strokeWidth="2"/></Ico></WinBtn>
              <WinBtn><Ico $s={11}><path d="M3 3l14 14M17 3L3 17" stroke="#ddd" strokeWidth="1.800"/></Ico></WinBtn>
            </WinCtl>
          </TitleBar>
          <MenuBar>
            <MenuIcon><Ico $s={17}><path d="M2 1h11l4 4v14H2z" fill="#fff" stroke={B} strokeWidth="1.200"/><path d="M5 5h9l-4.500 6zM5 17h9l-4.500-6z" fill="#f3c63d"/></Ico></MenuIcon>
            <Menu t="File" /><Menu t="Edit" /><Menu t="View" /><Menu t="Project" /><Menu t="Source" /><Menu t="Process" /><Menu t="Tools" /><Menu t="Window" /><Menu t="Layout" u={2} /><Menu t="Help" />
            <MdiBtns>
              <MdiBtn><Ico $s={12}><path d="M3 10h14" stroke="#555" strokeWidth="3"/></Ico></MdiBtn>
              <MdiBtn><TitleGlyph k="r" /></MdiBtn>
              <MdiBtn><TitleGlyph k="x" /></MdiBtn>
            </MdiBtns>
          </MenuBar>
          <ToolBar>
            <ToolGroup><Grip $w={7.5} /><ToolBtn><NewDoc /></ToolBtn><ToolBtn><OpenF /></ToolBtn><ToolBtn><Save /></ToolBtn><ToolBtn><SaveAll /></ToolBtn><ToolSep /><ToolBtn><Printer /></ToolBtn></ToolGroup>
            <ToolGroup><Grip /><ToolBtn><Cut /></ToolBtn><ToolBtn><Copy /></ToolBtn><ToolBtn><Paste /></ToolBtn><ToolBtn><Cross /></ToolBtn><ToolSep $w={7} /><ToolBtn><Undo /></ToolBtn><More>»</More></ToolGroup>
            <ToolGroup><Grip /><ToolBtn><Mag g="plus" /></ToolBtn><ToolBtn><Mag g="minus" /></ToolBtn><ToolBtn><Buoy /></ToolBtn><ToolBtn><Buoy /></ToolBtn><ToolBtn><Mag g="none" grey /></ToolBtn><ToolBtn><RefreshDoc /></ToolBtn><ToolSep /><ToolBtn $on $w={27}><Hammer /></ToolBtn></ToolGroup>
            <ToolGroup><Grip /><ToolBtn><Win1 /></ToolBtn><ToolBtn><Win2 /></ToolBtn><ToolBtn><Win3 /></ToolBtn><ToolBtn><Win4 /></ToolBtn></ToolGroup>
            <ToolGroup><Grip /><ToolBtn><Wrench /></ToolBtn><ToolBtn><HelpPtr /></ToolBtn></ToolGroup>
            <ToolGroup><Grip /><ToolBtn><Play /></ToolBtn><ToolBtn><Sigma /></ToolBtn><ToolBtn><Scope /></ToolBtn></ToolGroup>
            <ToolGroup $end><Grip /><ToolBtn><Bulb /></ToolBtn></ToolGroup>
          </ToolBar>
          <Workspace>
            <LeftCol>
              <PaneTitle>Design<PaneButtons /></PaneTitle>
              <Pane $h={307}>
                <IconRail>
                  <RailItem><NewLeaf /></RailItem><RailItem><DocList sign="#2ea84a" /></RailItem><RailItem><DocList2 /></RailItem><RailSep />
                  <RailItem><Nodes /></RailItem><RailSep /><RailItem><DocList sign="#d9232e" /></RailItem><RailSep />
                  <RailItem><RedGauge /></RailItem><RailItem><CheckDoc /></RailItem><RailSep /><RailItem><Win3 /></RailItem>
                </IconRail>
                <PaneMain>
                  <ViewRow>View:<Radio $on /><Gap $w={6} /><ImplIcon /><Gap $w={4} /><ClipLabel $w={99}>Implementation</ClipLabel><Gap $w={5} /><Radio /><Gap $w={6} /><SimIcon /><Gap $w={3} /><ClipLabel $w={65}>Simulation</ClipLabel></ViewRow>
                  <TreePanel>
                    <TreeTop>
                      <TreeCol>
                        <HeaderCell>Hierarchy</HeaderCell>
                        <TreeBody><TreeRows items={hier} /></TreeBody>
                      </TreeCol>
                      <ScrollV>
                        <ScrollBtn><Arrow $d="u" /></ScrollBtn>
                        <Thumb $h={67}><ThumbGrip /></Thumb>
                        <Track />
                        <ScrollBtn><Arrow $d="d" /></ScrollBtn>
                      </ScrollV>
                    </TreeTop>
                    <ScrollH>
                      <HBtn><Arrow $d="l" /></HBtn>
                      <HThumb><HThumbGrip /></HThumb>
                      <HTrack />
                      <HBtn><Arrow $d="r" /></HBtn>
                    </ScrollH>
                  </TreePanel>
                </PaneMain>
              </Pane>
              <HSplit $h={9}><HGrip /></HSplit>
              <Pane $h={260}>
                <IconRail>
                  <RailFirst><Play /></RailFirst><RailSep /><RailItem><Chip3 c="#2a7ad0" m="d" /></RailItem><RailItem><Chip3 c="#a9a8a3" m="x" /></RailItem><RailSep /><RailItem><Chip3 c="#a9a8a3" m="c" /></RailItem><RailSep /><RailItem><Win3 /></RailItem>
                </IconRail>
                <PaneMain>
                  <StatusRow><Refresh s={18} />No Processes Running</StatusRow>
                  <TreePanel>
                    <TreeTop>
                      <TreeCol>
                        <HeaderCell>Processes: RCA32</HeaderCell>
                        <TreeBody><TreeRows items={proc} /></TreeBody>
                      </TreeCol>
                      <ScrollV>
                        <ScrollBtn><Arrow $d="u" /></ScrollBtn>
                        <Track $h={16} />
                        <Thumb><ThumbGrip /></Thumb>
                        <ScrollBtn><Arrow $d="d" /></ScrollBtn>
                      </ScrollV>
                    </TreeTop>
                  </TreePanel>
                </PaneMain>
              </Pane>
              <TabRow $h={27}>
                <Tab $w={73} $gap={8}><Chevron />Start</Tab>
                <Tab $w={85} $on $gap={8}><FlowIcon />Design</Tab>
                <Tab $w={71} $pad={8} $gap={8}><FilesIcon />Files</Tab>
                <Tab $w={87} $pad={7} $gap={2}><LibIcon />Libraries</Tab>
              </TabRow>
            </LeftCol>
            <VSplit><VGrip /></VSplit>
            <RightCol>
              <UpperRow>
                <VTools>
                  <VBtn><Select /></VBtn><VBtn $on><Fit /></VBtn><VSep /><VBtn><Stars /></VBtn><VSep />
                  <VBtn><GateR /></VBtn><VBtn><GateL /></VBtn><VSep />
                  <VBtn><Gray1 /></VBtn><VBtn><Gray2 /></VBtn><VBtn><Gray3 /></VBtn><VBtn><Gray3 /></VBtn><VSep />
                  <VBtn><Gray4 /></VBtn><VBtn><TextA /></VBtn><VSep />
                  <VBtn><Pawn /></VBtn><VBtn><Round d="l" /></VBtn><VBtn><Round d="r" /></VBtn><VBtn><Clock2 /></VBtn><VSep />
                  <VBtn><TwoBox /></VBtn><VBtn><GreenPin /></VBtn>
                </VTools>
                <Canvas><Schematic /></Canvas>
              </UpperRow>
              <TabRow $h={27} $line>
                <DocTab $w={509}><DocLines /><DocLabel>ripple.v</DocLabel><BigX><CloseX /></BigX></DocTab>
                <DocTab $w={508} $on><SchemDoc /><DocLabel>RCA32 (RTL1)</DocLabel><BigX><CloseX /></BigX></DocTab>
              </TabRow>
            </RightCol>
          </Workspace>
          <HSplit $h={6}><HGrip /></HSplit>
          <BottomTitle>View by Category
            <BottomBtns>{(['h', 's', 'r', 'x'] as const).map(k => <TinyBtn key={k}><TitleGlyph k={k} /></TinyBtn>)}</BottomBtns>
          </BottomTitle>
          <Sections>
            <Section $w={913}>
              <SectionTitle>Design Objects of Top Level Block</SectionTitle>
              <SectionPanels>
                <ListBox><ListHead>Instances<Chev /></ListHead><InstRow><Exp $v="up" /><InstIcon><Instance /></InstIcon>RCA32</InstRow></ListBox>
                <ListBox><ListHead>Pins<Chev /></ListHead></ListBox>
                <ListBox><ListHead>Signals<Chev /></ListHead></ListBox>
              </SectionPanels>
            </Section>
            <SideGrip><SideGripBar /></SideGrip>
            <Section $w={913}>
              <SectionTitle>Properties: (No Selection)</SectionTitle>
              <ListBox $grow>
                <PropHead><PropCell>Name<Chev up /></PropCell><PropCell>Value</PropCell></PropHead>
              </ListBox>
            </Section>
          </Sections>
          <BottomTabs>
            <Tab $w={92} $pad={4} $gap={10}><ConsoleIco />Console</Tab>
            <Tab $w={80} $pad={5} $gap={10}><ErrIco />Errors</Tab>
            <Tab $w={102} $pad={6} $gap={9}><WarnIco />Warnings</Tab>
            <Tab $w={170} $pad={6} $gap={9}><FindIco />Find in Files Results</Tab>
            <Tab $w={155} $on $pad={5} $gap={8}><GridIco />View by Category</Tab>
          </BottomTabs>
          <StatusBar>[-192,228]</StatusBar>
        </Win>
      </Desk>
    </Screen>
  );
}
